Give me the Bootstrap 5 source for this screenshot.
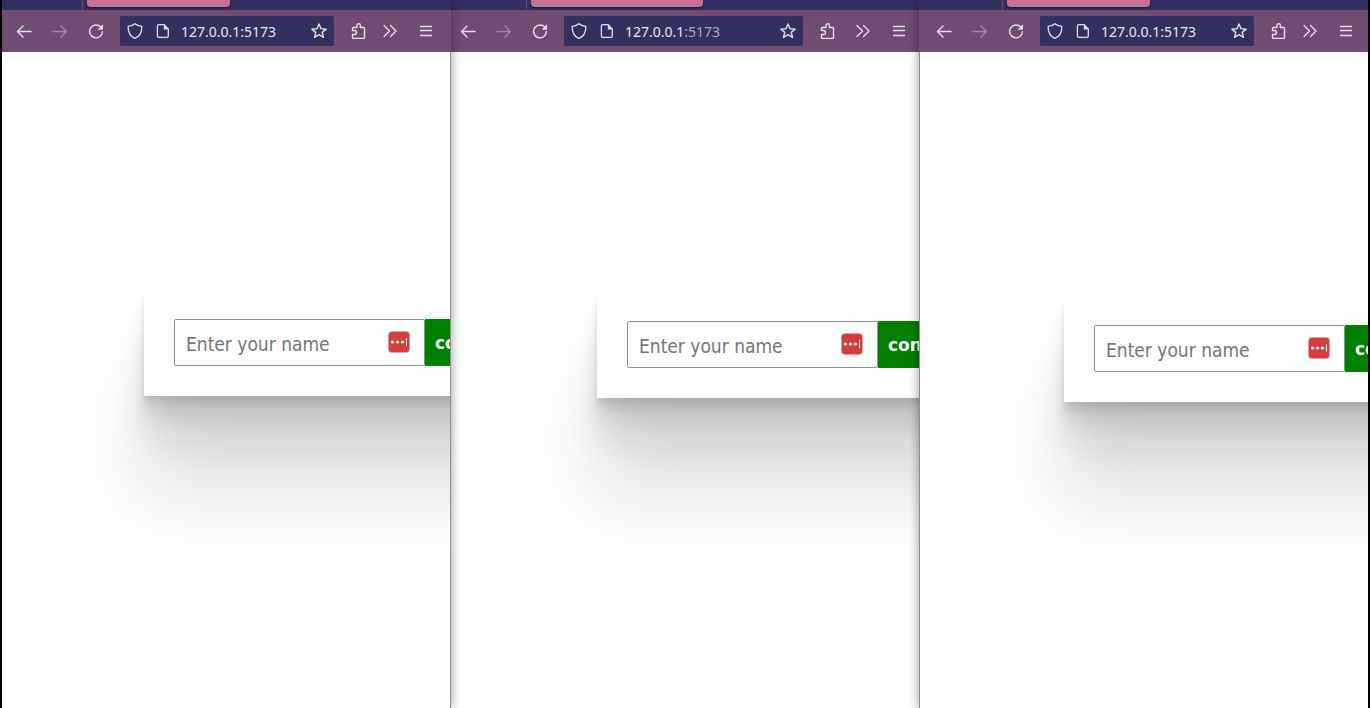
<!DOCTYPE html>
<html lang="en">
<head>
<meta charset="utf-8">
<meta name="viewport" content="width=device-width, initial-scale=1">
<title>Three browser windows</title>
<link rel="stylesheet" href="https://cdn.jsdelivr.net/npm/bootstrap@5.3.0/dist/css/bootstrap.min.css">
<style>
  body { background: #fefefe; font-family: "Noto Sans", "Open Sans", sans-serif; }
  .desk { border: solid #000; border-width: 0 2px; }
  .win { flex: 449 1 0; min-width: 0; background: #fefefe; position: relative; }
  .win-mid { flex-grow: 468; }
  .win-left, .win-right { z-index: 1; box-shadow: 0 0 10px rgba(0, 0, 0, .4); }
  .strip { height: 10px; background: #342f61; padding-left: var(--tab-start); gap: 4px; }
  .strip-line { width: 1px; background: #6b4a70; }
  .strip-tab { width: 143px; height: 7px; background: #c47397; border-radius: 0 0 4px 4px; box-shadow: 0 1px 2px rgba(0, 0, 0, .5); }
  .win-mid .strip-tab { width: 172px; }
  .bar { height: 42px; background: #704b72; gap: 2px; padding: 0 var(--bar-end) 0 var(--bar-start); }
  .tool { width: 34px; height: 32px; padding: 0; border: 0; background: none; color: #e3e0e0; }
  .tool:disabled { color: #a289a3; }
  .tool svg, .address svg { display: block; margin: auto; flex: none; }
  .win-left .tool-more, .win-right .tool-more { width: 26px; margin-right: 4px; }
  .address { height: 30px; margin: 0 5px; padding: 0 7px; background: #342f61; border-radius: 2px; color: #e0dfe3; font-size: 14px; min-width: 0; }
  .address svg { margin: 0; }
  .url { margin-left: 6px; padding-top: 2px; color: #e6e4ea; line-height: 20px; }
  .url-dim { color: #aaa8bd; }
  .star { width: 16px; height: 16px; color: inherit; }
  .page { padding: var(--page-top) 0 0 var(--page-start); overflow: hidden; min-height: 0; }
  .win-left .page { border-right: 1px solid #8e8e8e; }
  .win-right .page { border-left: 1px solid #8e8e8e; }
  .join { width: 420px; padding: 30px; background: #fefefe;
    box-shadow: 0 3px 2px rgba(0, 0, 0, .034), 0 7px 5px rgba(0, 0, 0, .048), 0 12px 10px rgba(0, 0, 0, .06),
      0 22px 18px rgba(0, 0, 0, .072), 0 42px 33px rgba(0, 0, 0, .086), 0 94px 70px rgba(0, 0, 0, .12); }
  .name-box { width: 251px; height: 47px; padding: 2px 11px 0; border: 1px solid #8f8f9d; border-radius: 2px; background: #fefefe; font-family: "DejaVu Sans Condensed", "DejaVu Sans", sans-serif; font-stretch: condensed; font-size: 19px; color: #222; }
  .name-box::placeholder { color: #757575; }
  .fill-icon { position: absolute; right: 15px; top: 12px; }
  .connect { height: 47px; padding: 3px 10px 0; border: 0; background: green; color: #fff; font-family: "DejaVu Sans", sans-serif; font-size: 17px; font-weight: 700; }
  .win-left { --tab-start: 80px; --bar-start: 5px; --bar-end: 8px; --page-start: 142px; --page-top: 237px; }
  .win-mid { --tab-start: 75px; --bar-start: 0px; --bar-end: 3px; --page-start: 146px; --page-top: 239px; }
  .win-right { --tab-start: 83px; --bar-start: 8px; --bar-end: 5px; --page-start: 144px; --page-top: 243px; }
</style>
<script src="https://cdn.jsdelivr.net/npm/bootstrap@5.3.0/dist/js/bootstrap.bundle.min.js"></script>
</head>
<body>
<svg class="d-none" aria-hidden="true">
  <defs>
    <g id="i-back" fill="none" stroke="currentColor" stroke-width="1.400" stroke-linecap="round" stroke-linejoin="round"><path d="M15 8.500H1.500M7 3L1.500 8.500 7 14"/></g>
    <g id="i-next" fill="none" stroke="currentColor" stroke-width="1.400" stroke-linecap="round" stroke-linejoin="round"><path d="M1 8.500H14.500M9 3l5.500 5.500L9 14"/></g>
    <g id="i-reload"><path d="M12.800 4.200A6.400 6.400 0 1 0 14.400 8.800" fill="none" stroke="currentColor" stroke-width="1.400" stroke-linecap="round"/><path d="M15 1.300V6.700H9.600z" fill="currentColor"/></g>
    <g id="i-shield"><path d="M8 .8C6.500 2.200 4 3 1.200 3.300 1 8.500 2.500 13 8 15.400 13.500 13 15 8.500 14.800 3.300 12 3 9.500 2.200 8 .8z" fill="none" stroke="currentColor" stroke-width="1.300" stroke-linejoin="round"/></g>
    <g id="i-page"><path d="M3.700 1.700H9l4.300 4.300V13a1.300 1.300 0 0 1-1.300 1.300H3.700A1.300 1.300 0 0 1 2.400 13V3a1.300 1.300 0 0 1 1.300-1.300z" fill="none" stroke="currentColor" stroke-width="1.300"/><path d="M8.800 1.500v5h4.800z" fill="currentColor"/></g>
    <g id="i-star"><path d="M8 1l2 4.700 5.200.4-4 3.300 1.300 5L8 11.700l-4.500 2.700 1.300-5-4-3.300L6 5.700z" fill="none" stroke="currentColor" stroke-width="1.400" stroke-linejoin="round"/></g>
    <g id="i-ext"><path d="M2.500 7.500V5.500A1 1 0 0 1 3.500 4.500H7V2.500a1.700 1.700 0 0 1 3.400 0V4.500h3.100a1 1 0 0 1 1 1v9a1 1 0 0 1-1 1H3.500a1 1 0 0 1-1-1V11.500H4.500a2 2 0 0 0 0-4H2.500z" fill="none" stroke="currentColor" stroke-width="1.400" stroke-linejoin="round"/></g>
    <g id="i-more"><path d="M2 2.500L7.500 8 2 13.500M8.500 2.500L14 8l-5.500 5.500" fill="none" stroke="currentColor" stroke-width="1.400" stroke-linecap="round" stroke-linejoin="round"/></g>
    <g id="i-menu"><path d="M2 3.500h12M2 7.500h12M2 12.500h12" fill="none" stroke="currentColor" stroke-width="1.400"/></g>
    <g id="i-fill"><rect width="22" height="22" rx="4" fill="#e3c5bb"/><rect x=".7" y=".7" width="20.600" height="20.600" rx="3.500" fill="#d43d3a"/><g fill="#fff"><circle cx="4.500" cy="11" r="1.600"/><circle cx="9.500" cy="11" r="1.600"/><circle cx="14.500" cy="11" r="1.600"/><path d="M18 7h1v8h-1z"/></g></g>
  </defs>
</svg>

<main class="desk d-flex vh-100 overflow-hidden">
  <section class="win win-left d-flex flex-column">
    <div class="strip d-flex"><span class="strip-line"></span><span class="strip-tab"></span></div>
    <nav class="bar d-flex align-items-center" aria-label="Left window">
      <button class="tool" type="button" aria-label="Back"><svg width="16" height="16"><use href="#i-back"/></svg></button>
      <button class="tool" type="button" aria-label="Forward" disabled><svg width="16" height="16"><use href="#i-next"/></svg></button>
      <button class="tool" type="button" aria-label="Reload"><svg width="16" height="16"><use href="#i-reload"/></svg></button>
      <div class="address d-flex align-items-center flex-grow-1">
        <svg width="16" height="16"><use href="#i-shield"/></svg>
        <svg class="ms-2" width="24" height="16" viewBox="-4 0 24 16"><use href="#i-page"/></svg>
        <span class="url me-auto">127.0.0.1:5173</span>
        <button class="tool star" type="button" aria-label="Bookmark"><svg width="16" height="16"><use href="#i-star"/></svg></button>
      </div>
      <button class="tool" type="button" aria-label="Extensions"><svg width="16" height="16"><use href="#i-ext"/></svg></button>
      <button class="tool tool-more" type="button" aria-label="More tools"><svg width="16" height="16"><use href="#i-more"/></svg></button>
      <button class="tool" type="button" aria-label="Menu"><svg width="16" height="16"><use href="#i-menu"/></svg></button>
    </nav>
    <div class="page d-flex align-items-start flex-grow-1">
      <form class="join d-flex flex-shrink-0">
        <div class="position-relative">
          <input class="name-box d-block" type="text" placeholder="Enter your name" aria-label="Enter your name">
          <svg class="fill-icon" width="22" height="22"><use href="#i-fill"/></svg>
        </div>
        <button class="connect" type="button">connect</button>
      </form>
    </div>
  </section>

  <section class="win win-mid d-flex flex-column">
    <div class="strip d-flex"><span class="strip-line"></span><span class="strip-tab"></span></div>
    <nav class="bar d-flex align-items-center" aria-label="Middle window">
      <button class="tool" type="button" aria-label="Back"><svg width="16" height="16"><use href="#i-back"/></svg></button>
      <button class="tool" type="button" aria-label="Forward" disabled><svg width="16" height="16"><use href="#i-next"/></svg></button>
      <button class="tool" type="button" aria-label="Reload"><svg width="16" height="16"><use href="#i-reload"/></svg></button>
      <div class="address d-flex align-items-center flex-grow-1">
        <svg width="16" height="16"><use href="#i-shield"/></svg>
        <svg class="ms-2" width="24" height="16" viewBox="-4 0 24 16"><use href="#i-page"/></svg>
        <span class="url me-auto">127.0.0.1<span class="url-dim">:5173</span></span>
        <button class="tool star" type="button" aria-label="Bookmark"><svg width="16" height="16"><use href="#i-star"/></svg></button>
      </div>
      <button class="tool" type="button" aria-label="Extensions"><svg width="16" height="16"><use href="#i-ext"/></svg></button>
      <button class="tool tool-more" type="button" aria-label="More tools"><svg width="16" height="16"><use href="#i-more"/></svg></button>
      <button class="tool" type="button" aria-label="Menu"><svg width="16" height="16"><use href="#i-menu"/></svg></button>
    </nav>
    <div class="page d-flex align-items-start flex-grow-1">
      <form class="join d-flex flex-shrink-0">
        <div class="position-relative">
          <input class="name-box d-block" type="text" placeholder="Enter your name" aria-label="Enter your name">
          <svg class="fill-icon" width="22" height="22"><use href="#i-fill"/></svg>
        </div>
        <button class="connect" type="button">connect</button>
      </form>
    </div>
  </section>

  <section class="win win-right d-flex flex-column">
    <div class="strip d-flex"><span class="strip-line"></span><span class="strip-tab"></span></div>
    <nav class="bar d-flex align-items-center" aria-label="Right window">
      <button class="tool" type="button" aria-label="Back"><svg width="16" height="16"><use href="#i-back"/></svg></button>
      <button class="tool" type="button" aria-label="Forward" disabled><svg width="16" height="16"><use href="#i-next"/></svg></button>
      <button class="tool" type="button" aria-label="Reload"><svg width="16" height="16"><use href="#i-reload"/></svg></button>
      <div class="address d-flex align-items-center flex-grow-1">
        <svg width="16" height="16"><use href="#i-shield"/></svg>
        <svg class="ms-2" width="24" height="16" viewBox="-4 0 24 16"><use href="#i-page"/></svg>
        <span class="url me-auto">127.0.0.1:5173</span>
        <button class="tool star" type="button" aria-label="Bookmark"><svg width="16" height="16"><use href="#i-star"/></svg></button>
      </div>
      <button class="tool" type="button" aria-label="Extensions"><svg width="16" height="16"><use href="#i-ext"/></svg></button>
      <button class="tool tool-more" type="button" aria-label="More tools"><svg width="16" height="16"><use href="#i-more"/></svg></button>
      <button class="tool" type="button" aria-label="Menu"><svg width="16" height="16"><use href="#i-menu"/></svg></button>
    </nav>
    <div class="page d-flex align-items-start flex-grow-1">
      <form class="join d-flex flex-shrink-0">
        <div class="position-relative">
          <input class="name-box d-block" type="text" placeholder="Enter your name" aria-label="Enter your name">
          <svg class="fill-icon" width="22" height="22"><use href="#i-fill"/></svg>
        </div>
        <button class="connect" type="button">connect</button>
      </form>
    </div>
  </section>
</main>
</body>
</html>
